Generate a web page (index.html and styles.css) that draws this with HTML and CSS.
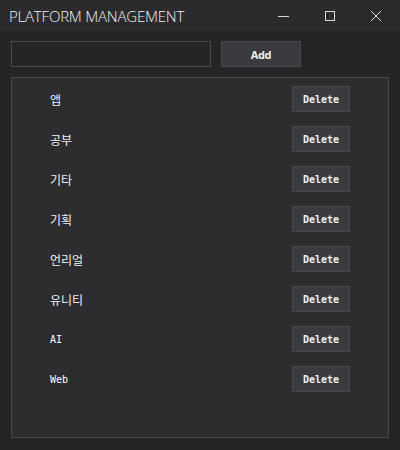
FILE: index.html
```html
<!DOCTYPE html>
<html>
<head>
<meta charset="utf-8">
<link rel="stylesheet" href="styles.css">
</head>
<body>
<div class="window">
  <div class="titlebar">
    <div class="title">PLATFORM MANAGEMENT</div>
    <div class="controls">
      <span class="ctl"><svg width="12" height="12" viewBox="0 0 12 12"><path d="M0 6.5H11" stroke="#d8d8d8" stroke-width="1"/></svg></span>
      <span class="ctl"><svg width="12" height="12" viewBox="0 0 12 12"><rect x="1.5" y="1.5" width="9" height="9" fill="none" stroke="#d8d8d8" stroke-width="1"/></svg></span>
      <span class="ctl"><svg width="12" height="12" viewBox="0 0 12 12"><path d="M1 1L11 11M11 1L1 11" stroke="#d8d8d8" stroke-width="1"/></svg></span>
    </div>
  </div>
  <div class="content">
    <div class="toolbar">
      <input class="field" type="text">
      <button class="btn add">Add</button>
    </div>
    <div class="list">
      <div class="row"><span class="name">앱</span><button class="btn del">Delete</button></div>
      <div class="row"><span class="name">공부</span><button class="btn del">Delete</button></div>
      <div class="row"><span class="name">기타</span><button class="btn del">Delete</button></div>
      <div class="row"><span class="name">기획</span><button class="btn del">Delete</button></div>
      <div class="row"><span class="name">언리얼</span><button class="btn del">Delete</button></div>
      <div class="row"><span class="name">유니티</span><button class="btn del">Delete</button></div>
      <div class="row"><span class="name latin">AI</span><button class="btn del">Delete</button></div>
      <div class="row"><span class="name latin">Web</span><button class="btn del">Delete</button></div>
    </div>
  </div>
</div>
</body>
</html>
```
FILE: styles.css
```css
html, body {
  margin: 0;
  padding: 0;
  background: #252526;
}
.window {
  width: 400px;
  height: 450px;
  display: flex;
  flex-direction: column;
  background: #252526;
}
.titlebar {
  height: 31px;
  background: #2b2b2d;
  display: flex;
  align-items: center;
  justify-content: space-between;
}
.title {
  padding-left: 9px;
  font-family: "Open Sans", "Liberation Sans", sans-serif;
  font-size: 15px;
  font-weight: 300;
  color: #f0f0f0;
  letter-spacing: -0.2px;
  margin-top: 1px;
}
.controls {
  display: flex;
  align-items: center;
  padding-right: 18px;
}
.ctl {
  display: flex;
  width: 12px;
  height: 12px;
  margin-left: 34px;
}
.ctl:first-child { margin-left: 0; }
.content {
  padding: 10px 11px 12px 11px;
  display: flex;
  flex-direction: column;
  gap: 10px;
  flex: 1;
}
.toolbar {
  display: flex;
  gap: 10px;
  height: 26px;
}
.field {
  box-sizing: border-box;
  width: 200px;
  height: 26px;
  margin: 0;
  background: #252526;
  border: 1px solid #4a4a4c;
  color: #eee;
  outline: none;
}
.btn {
  box-sizing: border-box;
  margin: 0;
  padding: 0;
  background: #3a3a3f;
  border: 1px solid #47474c;
  color: #f0f0f0;
  cursor: pointer;
}
.add {
  width: 80px;
  height: 26px;
  font-family: "Open Sans", "Liberation Sans", sans-serif;
  font-size: 11px;
  font-weight: 700;
  letter-spacing: -0.4px;
}
.list {
  flex: 1;
  background: #2d2d30;
  border: 1px solid #4a4a4c;
  padding-top: 8px;
  display: flex;
  flex-direction: column;
  gap: 14px;
}
.row {
  display: flex;
  align-items: center;
  justify-content: space-between;
  height: 26px;
  padding-left: 38px;
  padding-right: 38px;
}
.name {
  font-family: "Noto Sans CJK KR", "DejaVu Sans Mono", sans-serif;
  font-size: 12px;
  color: #f0f0f0;
}
.name.latin {
  font-family: "DejaVu Sans Mono", monospace;
  font-size: 10px;
  font-weight: 400;
  color: #ffffff;
}
.del {
  width: 58px;
  height: 26px;
  font-family: "DejaVu Sans Mono", monospace;
  font-size: 10px;
  font-weight: 700;
}
```
